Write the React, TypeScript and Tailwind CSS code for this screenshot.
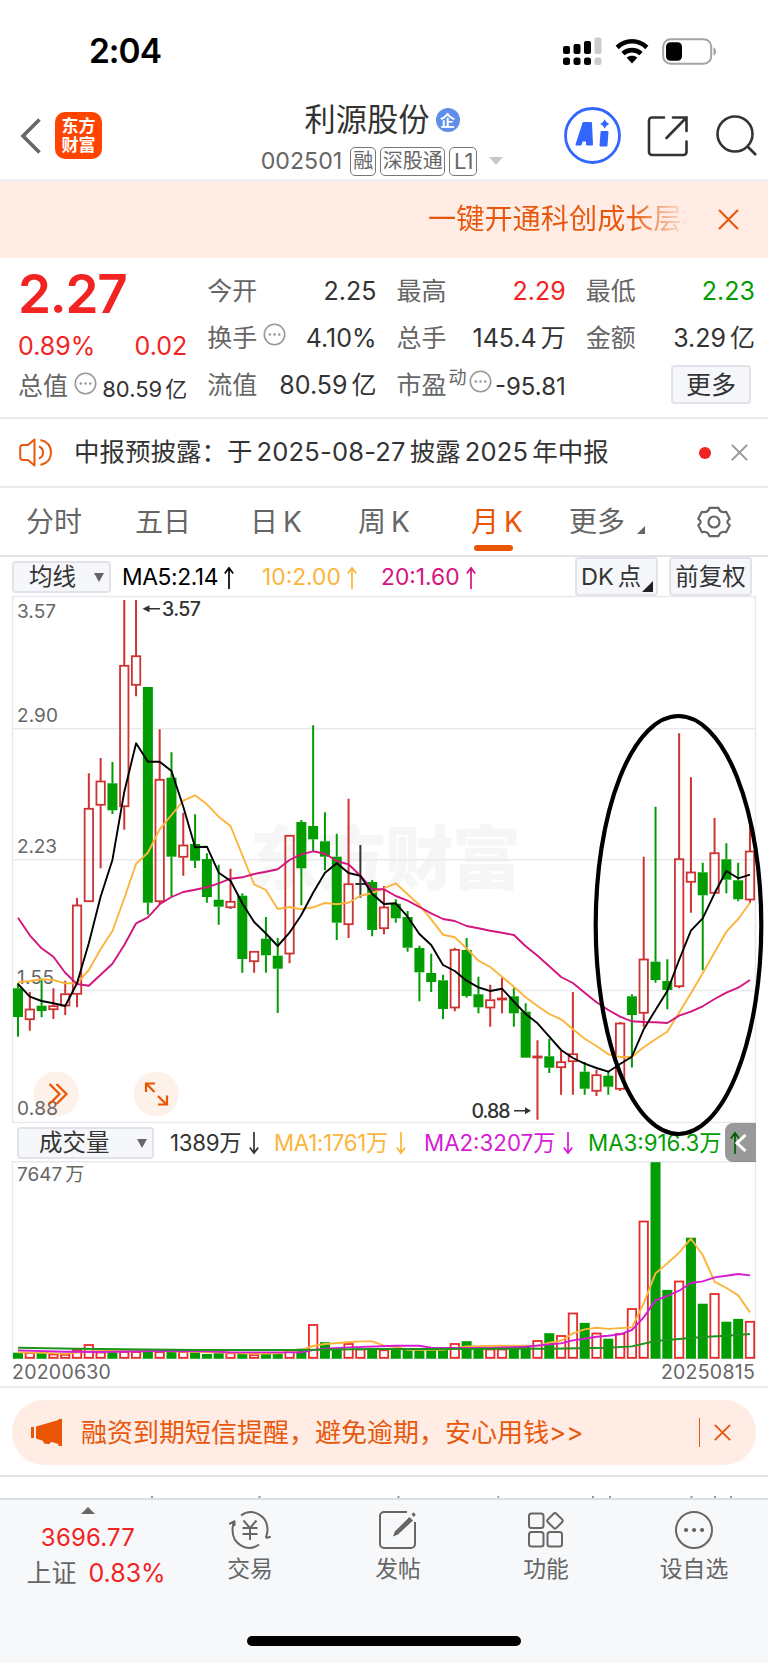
import React from 'react';

type Candle = [kind: 'u' | 'd' | 'n', high: number, top: number, bottom: number, low: number];

// monthly candles, y values in plot units
const CANDLES: Candle[] = [
    ['d', 983, 988.3, 1017, 1036.7], ['u', 992, 1009, 1019.7, 1030.7], ['d', 980, 1005.7, 1011, 1017.3],
    ['u', 988.3, 1005.7, 1009.7, 1019], ['u', 980.7, 993.7, 1006, 1015], ['u', 898, 905, 994.3, 1007.3],
    ['u', 773.3, 808.3, 901.7, 902], ['u', 758, 781, 805.3, 868.3], ['d', 762, 783.3, 810.3, 814],
    ['u', 600, 665.3, 806.7, 829.7], ['u', 600, 655.7, 685.3, 696.3], ['d', 687, 687, 902.7, 914.7],
    ['u', 729.3, 779.3, 901.7, 904], ['d', 752.3, 777.7, 856.7, 896.7], ['u', 812.7, 845, 857.3, 875.7],
    ['d', 814.3, 844, 860.7, 868], ['d', 853.3, 859, 897, 902.7], ['d', 864.7, 899.7, 906.7, 924.7],
    ['u', 868.7, 901.3, 907.7, 909], ['d', 893.3, 895.7, 959, 972.7], ['u', 951, 951.3, 961.7, 972.7],
    ['d', 917, 938.7, 955.3, 972.7], ['d', 938, 955.7, 968.7, 1013], ['u', 835, 835.3, 954, 963.3],
    ['d', 820, 822, 868.3, 905.3], ['d', 725.3, 826, 839.3, 851.7], ['d', 812.3, 841.3, 856.7, 870.3],
    ['d', 833.7, 856.7, 922.7, 940], ['u', 798.7, 883.7, 924.7, 938], ['n', 845, 883, 885, 897.7],
    ['d', 880, 882, 930, 936.3], ['u', 886, 907, 928.7, 934.3], ['d', 899.3, 903.7, 918.3, 922.7],
    ['d', 911, 917, 947.7, 951.7], ['d', 945.7, 948, 972.3, 1001.3], ['d', 953.7, 973, 982, 992],
    ['d', 974.7, 980.3, 1009, 1019], ['u', 947.7, 949.3, 1008, 1011.3], ['d', 938, 950, 996, 997.7],
    ['d', 976.7, 994.3, 1007.3, 1013.3], ['u', 984.7, 999.7, 1008, 1026.7], ['u', 978, 998, 1000, 1013.3],
    ['d', 988, 996.3, 1013.3, 1026.7], ['d', 1003.3, 1011.7, 1057.7, 1057.7], ['u', 1040.3, 1056, 1058, 1119.7],
    ['d', 1038.7, 1056.3, 1067.7, 1073], ['u', 1051, 1061.7, 1067.7, 1094.7], ['u', 992, 1053.7, 1061.7, 1094.7],
    ['d', 1062, 1071.7, 1088.7, 1094.7], ['u', 1069.7, 1074.7, 1091.3, 1096], ['d', 1071, 1075.7, 1086.7, 1094.7],
    ['u', 1022, 1023, 1089.3, 1091], ['d', 994.3, 996.3, 1015, 1067.5], ['u', 856.7, 959, 1013.3, 1026.7],
    ['d', 806.7, 961.7, 980, 982.7], ['d', 959.3, 981, 990, 1009.3], ['u', 733.3, 858.7, 986.7, 988.3],
    ['u', 777.3, 872, 882.3, 912.7], ['d', 862.7, 872.3, 895.3, 970.3], ['u', 818, 852.7, 893.3, 893.5],
    ['d', 843.3, 859.3, 879.7, 893.3], ['d', 862.7, 880.3, 899.3, 901.3], ['u', 825, 851, 900, 902.7],
];

const MA5 = [
    984, 996.7, 1001, 1003.3, 1006, 983.3, 943.3, 896.7, 860, 791.7, 743.3, 761.7, 761.7, 771, 806.7, 847.3,
    846.7, 872.7, 880.7, 903.3, 922, 933.5, 946, 932.7, 915, 892.7, 872.7, 863.3, 873, 875.7, 894, 904,
    903.3, 916.7, 934, 945, 965, 971, 980.7, 987.3, 991, 988.7, 1001.7, 1014, 1023.3, 1036.7, 1050, 1058,
    1063.7, 1068, 1071.7, 1064, 1056.7, 1029.3, 1010, 991, 960, 930.7, 918.3, 893.3, 871, 878.3, 874.7,
];

const MA10 = [
    982.3, 981, 979.3, 980, 983.3, 983.3, 970, 949.3, 931, 898.3, 863.7, 852.7, 829.3, 815, 800.7, 795.3,
    804.3, 816.7, 826, 855, 884.3, 890, 909, 907, 909.3, 907.3, 903, 904.3, 902.7, 895.7, 893, 888.3,
    883.3, 894.3, 905, 919.3, 934.7, 937.3, 948.3, 960.7, 967, 976.7, 986.7, 997.3, 1006, 1014, 1019.3, 1029.3,
    1038.7, 1046, 1054.3, 1057, 1057, 1047.3, 1039.3, 1031.7, 1012.7, 993.3, 973.3, 952.3, 931.7, 919, 902.7,
];

const MA20 = [
    917.7, 935.3, 948.3, 956.7, 972.7, 984, 985.7, 974.7, 963.7, 945, 923.3, 917.3, 904.3, 897, 892, 889.7,
    887.3, 883.3, 878.7, 877.3, 874, 871.7, 869.3, 860, 854.3, 851.3, 853.7, 861, 864.3, 875.7, 889.3, 889.3,
    896, 900.7, 907, 913.3, 919, 921, 926, 928.3, 930.7, 932.7, 935, 946.3, 955.7, 966.3, 977, 983,
    992.7, 1002.3, 1010, 1016.7, 1021.3, 1022, 1022.3, 1023, 1015.7, 1011.7, 1006.3, 999, 992.7, 987.7, 980,
];

// volume bar heights
const VOLUMES = [
    6, 6, 6, 4.5, 4.2, 9, 14, 6.5, 6.5, 7, 7, 7, 7, 7.3, 7, 7, 4.7, 5.7, 5.7, 5, 4, 4.7, 5.3, 7.3, 10, 34, 16.5,
    10, 15, 9.5, 10, 8.8, 10, 9.5, 9.5, 9.5, 9.5, 15, 17.5, 9.8, 9.5, 9.5, 10, 13.8, 18, 25.5, 23, 45.5, 35.8,
    25.5, 20, 25, 50, 137.5, 196.5, 68.8, 77.5, 121, 55, 65, 37, 39.8, 37.2,
];
const VOLUME_KIND = 'drdrrrrrdrrdrdrdddrdrddrdrddrrdrdddddrddrrddrdrrdrdrrrddrddrddr';

const VOL_MA1: [number, number][] = [
    [0, 6.5], [2, 6], [4, 4.8], [6, 7.3], [9, 8.7], [18, 6], [20, 4.8], [22, 5.3], [24, 8.7], [25, 12.7], [26, 14.7],
    [28, 16.5], [29, 17.3], [30, 17.3], [31, 13], [32, 11.7], [33, 9], [36, 8.8], [38, 12.3], [41, 13], [44, 12.7],
    [45, 16], [46, 18], [47, 25.3], [48, 29.3], [49, 31], [50, 29.8], [52, 31.3], [53, 55.3], [54, 85.3], [55, 95.3],
    [56, 106], [57, 120], [58, 103.7], [59, 77], [60, 70.7], [61, 63.3], [62, 46.3],
];
const VOL_MA2: [number, number][] = [
    [0, 8.3], [4, 7], [7, 6.7], [12, 7.7], [16, 7.5], [18, 6.3], [24, 6.3], [25, 8.7], [26, 10], [28, 11.3], [32, 13],
    [34, 13], [35, 11], [40, 10.7], [43, 12], [45, 14.3], [46, 15.3], [47, 18.3], [48, 20], [49, 22], [50, 23],
    [51, 24.3], [52, 28.7], [53, 41.3], [54, 58.3], [55, 62.7], [56, 68], [57, 75.7], [58, 77.3], [59, 81.3],
    [60, 83], [61, 84.7], [62, 83.3],
];
const VOL_MA3: [number, number][] = [
    [0, 11], [5, 10], [15, 8.7], [24, 8.7], [30, 9.7], [35, 9.7], [45, 10], [50, 11], [52, 12.3], [54, 17.7],
    [56, 19.7], [58, 21.7], [60, 23], [62, 24.7],
];

const RED = '#cd3333';
const VOL_RED = '#e82a2a';
const GREEN = '#029d02';
const BASE = 1358.7;

const cx = (i: number) => 18 + i * 11.806;
const toPoints = (values: number[]) => values.map((y, i) => `${cx(i).toFixed(1)},${y}`).join(' ');
const toVolPoints = (values: [number, number][]) => values.map(([i, v]) => `${cx(i).toFixed(1)},${BASE - v}`).join(' ');

const Close: React.FC<{ size: number; className?: string; width?: number }> = ({ size, className, width = 2 }) => (
    <svg width={size} height={size} viewBox="0 0 20 20" className={className} fill="none" stroke="currentColor" strokeWidth={width}>
        <path d="M1 1 19 19M19 1 1 19" />
    </svg>
);

const Arrow: React.FC<{ down?: boolean }> = ({ down }) => (
    <svg width="10" height="24" viewBox="0 0 10 24" className={down ? 'rotate-180' : ''} fill="none" stroke="currentColor" strokeWidth="1.700">
        <path d="M5 23V2M.8 7.500 5 2l4.200 5.500" />
    </svg>
);

const MoreDots: React.FC = () => (
    <svg width="23" height="23" viewBox="0 0 23 23" className="shrink-0" fill="none" stroke="#999">
        <circle cx="11.500" cy="11.500" r="10.200" strokeWidth="1.600" />
        <path d="M6.800 11.500h.1M11.500 11.500h.1M16.200 11.500h.1" strokeWidth="2.600" strokeLinecap="round" />
    </svg>
);

const StatusBar: React.FC = () => (
    <div className="flex h-[100px] items-start justify-between pl-[89px] pr-[50px]">
        <span className="pt-[30px] text-[33.500px] leading-[42px] font-semibold tracking-[-1px] text-black">2:04</span>
        <div className="flex items-center pt-[36px]">
            <svg width="40" height="30" viewBox="0 0 40 30">
                <g fill="#000">
                    <rect x="1" y="10" width="7" height="8" rx="2" />
                    <rect x="11.500" y="8" width="7" height="10" rx="2" />
                    <rect x="22" y="5" width="7" height="13" rx="2" />
                    <rect x="1" y="21.500" width="7" height="7.500" rx="2.500" />
                    <rect x="11.500" y="21.500" width="7" height="7.500" rx="2.500" />
                    <rect x="22" y="21.500" width="7" height="7.500" rx="2.500" />
                </g>
                <g fill="#cbcbcb">
                    <rect x="32.500" y="1.500" width="7" height="16.500" rx="2" />
                    <rect x="32.500" y="21.500" width="7" height="7.500" rx="2.500" />
                </g>
            </svg>
            <svg width="34" height="26" viewBox="0 0 34 26" className="ml-[13px]" fill="none" stroke="#000" strokeWidth="4.600">
                <path d="M2.200 9.500C10.500 1.200 23.500 1.200 31.800 9.500" />
                <path d="M8 15.600c5-4.700 13-4.700 18 0" />
                <path d="m17 25.500-5.300-5.800c3-2.500 7.600-2.500 10.600 0z" fill="#000" stroke="none" />
            </svg>
            <svg width="56" height="27" viewBox="0 0 56 27" className="ml-[13px]">
                <rect x="1.200" y="1.200" width="48" height="24.500" rx="7.500" fill="none" stroke="#a3a3a3" strokeWidth="2" />
                <rect x="4" y="4.200" width="16" height="18.600" rx="4.500" />
                <path d="M51.500 9.500c3.300 1 3.300 7 0 8z" fill="#a3a3a3" />
            </svg>
        </div>
    </div>
);

const Header: React.FC = () => (
    <header className="grid h-[81px] grid-cols-[240px_1fr_240px] border-b-2 border-[#ebedf0]">
        <div className="flex items-start pt-[12px] pl-[19px]">
            <svg width="22" height="36" viewBox="0 0 22 36" className="mt-[6px]" fill="none" stroke="#666" strokeWidth="3.600">
                <path d="M20.500 1.500 4 18l16.500 16.500" />
            </svg>
            <div className="ml-[14px] flex h-[47px] w-[47px] flex-col items-center justify-center rounded-[10px] bg-[#ff4400] text-[17px] leading-[19px] font-bold text-white">
                <span>东方</span>
                <span>财富</span>
            </div>
        </div>
        <div className="flex flex-col items-center pr-[4px]">
            <div className="flex h-[40px] items-center text-[31.300px] leading-[40px] text-[#333]">
                利源股份
                <span className="ml-[6px] flex h-6 w-6 items-center justify-center rounded-full bg-[#5f8fe8] text-[15px] leading-none font-bold text-white">企</span>
            </div>
            <div className="mt-[6px] flex h-[30px] items-center text-[20px] text-[#666]">
                <span className="mr-2 text-[23.200px]">002501</span>
                <span className="mr-1 flex h-[29px] items-center rounded-[5px] border-[1.500px] border-[#777] px-[2px]">融</span>
                <span className="mr-1 flex h-[29px] items-center rounded-[5px] border-[1.500px] border-[#777] px-[1.500px]">深股通</span>
                <span className="flex h-[29px] w-[28px] items-center justify-center rounded-[5px] border-[1.500px] border-[#777] text-[22px] tracking-[-1px]">L1</span>
                <svg width="14" height="8" className="ml-[12px]" fill="#c8c8c8"><path d="M0 0h14L7 8z" /></svg>
            </div>
        </div>
        <div className="flex items-start pt-[7px] pl-[36px]">
            <svg width="57" height="57" viewBox="0 0 57 57" fill="none" stroke="#3366ff">
                <circle cx="28.500" cy="28.500" r="27" strokeWidth="2.800" />
                <path d="M12.500 37.500 19.500 16h7.500l1 21.500h-5v-4h-5l-1.300 4zM20.300 28.500h3V22z" fill="#3366ff" strokeWidth="2" strokeLinejoin="round" />
                <path d="M37.500 25h6l-1 13.500h-6z" fill="#3366ff" strokeWidth="2" strokeLinejoin="round" />
                <path d="M40.700 12.300q1.200 3.500 4.500 4.700-3.300 1.200-4.500 4.700-1.200-3.500-4.500-4.700 3.300-1.200 4.500-4.700z" fill="#3366ff" stroke="none" />
            </svg>
            <svg width="42" height="42" viewBox="0 0 42 42" className="ml-[26px] mt-[8px]" fill="none" stroke="#333" strokeWidth="2.600" strokeLinecap="round">
                <path d="M17 2.500H5a3 3 0 0 0-3 3V37a3 3 0 0 0 3 3h31.500a3 3 0 0 0 3-3V26.500" />
                <path d="M26 2.500h13.500V16M39 3 19.500 23" />
            </svg>
            <svg width="42" height="42" viewBox="0 0 42 42" className="ml-[26px] mt-[7px]" fill="none" stroke="#333" strokeWidth="2.600">
                <circle cx="20" cy="20" r="17.500" />
                <path d="m32.500 32.500 8.500 8.500" />
            </svg>
        </div>
    </header>
);

const Banner: React.FC = () => (
    <div className="flex h-[77px] items-center justify-end bg-[#feece5] pr-[29px] text-[#e8580c]">
        <div className="w-[260px] overflow-hidden bg-gradient-to-r from-[#e8580c] from-78% to-transparent bg-clip-text text-[28.200px] whitespace-nowrap text-transparent">
            一键开通科创成长层权
        </div>
        <Close size={21} className="ml-[30px]" />
    </div>
);

interface CellProps {
    label: string;
    value?: string;
    unit?: string;
    tone?: string;
    dots?: boolean;
    sup?: string;
}

const Cell: React.FC<CellProps> = ({ label, value, unit, tone = 'text-[#333]', dots, sup }) => (
    <div className="flex h-[47px] items-center justify-between text-[25px] whitespace-nowrap">
        <span className="flex items-center text-[#666]">
            {label}
            {sup && <span className="-mt-[16px] ml-[2px] w-[20px] text-[18px]">{sup}</span>}
            {dots && <span className={sup ? '-mt-[8px]' : '-mt-[8px] ml-[6px]'}><MoreDots /></span>}
        </span>
        <span className={tone}>
            {value}
            {unit && <span className="ml-[4px]">{unit}</span>}
        </span>
    </div>
);

const Quote: React.FC = () => (
    <section className="grid h-[161px] grid-cols-4 gap-x-5 border-b-2 border-[#ebebeb] pt-[10px] pr-[13px] pl-[18px]">
        <div className="text-[#f12323]">
            <div className="h-[56px] text-[53px] leading-[53px] font-semibold tracking-[-1.200px]">2.27</div>
            <div className="flex h-[46px] items-center justify-between text-[25px]">
                <span>0.89%</span>
                <span>0.02</span>
            </div>
            <div className="flex h-[34px] items-center justify-between text-[25px] whitespace-nowrap text-[#666]">
                <span className="flex items-center">总值<span className="-mt-[8px] ml-[6px]"><MoreDots /></span></span>
                <span className="pt-[4px] text-[22px] text-[#333]">80.59<span className="ml-[3px]">亿</span></span>
            </div>
        </div>
        <div>
            <Cell label="今开" value="2.25" />
            <Cell label="换手" value="4.10%" dots />
            <Cell label="流值" value="80.59" unit="亿" />
        </div>
        <div>
            <Cell label="最高" value="2.29" tone="text-[#f12323]" />
            <Cell label="总手" value="145.4" unit="万" />
            <Cell label="市盈" sup="动" value="-95.81" dots tone="text-[#333] text-[24px] pt-[3px]" />
        </div>
        <div>
            <Cell label="最低" value="2.23" tone="text-[#029d02]" />
            <Cell label="金额" value="3.29" unit="亿" />
            <div className="flex justify-end pt-[3px] pr-[4px]">
                <button className="h-[39px] w-[80px] rounded-[4px] border-2 border-[#e1e3e9] bg-[#f6f7fa] text-[25px] leading-[34px] text-[#333]">更多</button>
            </div>
        </div>
    </section>
);

const Notice: React.FC = () => (
    <div className="flex h-[69px] items-center border-b-2 border-[#ebebeb] pr-[20px] pl-[19px] text-[25.500px] text-[#333]">
        <svg width="34" height="29" viewBox="0 0 34 29" fill="none" stroke="#e8580c" strokeWidth="2" strokeLinejoin="round">
            <path d="M15.500 1.500v26L9 22H4q-2.800 0-2.800-3v-9q0-3 2.800-3h5z" />
            <path d="M20 8.500q4 1.500 4 6t-4 6M21.500 2q10.500 2.500 10.500 12.500T21.500 27" />
        </svg>
        <span className="ml-[21px] whitespace-nowrap">中报预披露：于<span className="mx-[4px] tracking-[0.200px]">2025-08-27</span>披露<span className="mx-[4px] tracking-[0.200px]">2025</span>年中报</span>
        <span className="ml-auto h-3 w-3 rounded-full bg-[#f12323]" />
        <Close size={17} className="ml-[20px] text-[#999]" width={2.4} />
    </div>
);

const Tabs: React.FC = () => (
    <nav className="flex h-[69px] items-start border-b-2 border-[#e1e3e9] pt-[14px] pl-[26px] text-[28px] leading-[40px] whitespace-nowrap text-[#666]">
        <span className="w-[109px]">分时</span>
        <span className="w-[115px]">五日</span>
        <span className="w-[108px]">日<span className="ml-[5px]">K</span></span>
        <span className="w-[113px]">周<span className="ml-[5px]">K</span></span>
        <span className="w-[98px] text-[#ea5504]">
            月<span className="ml-[5px]">K</span>
            <span className="mt-[3px] ml-[3px] block h-[6px] w-[39px] rounded-[3px] bg-[#ea5504]" />
        </span>
        <span className="flex w-[128px] items-start">
            更多
            <svg width="8" height="8" className="mt-[24px] ml-[12px]" fill="#666"><path d="M8 0v8H0z" /></svg>
        </span>
        <svg width="34" height="32" viewBox="0 0 34 32" className="mt-[4px]" fill="none" stroke="#666" strokeWidth="2.200" strokeLinejoin="round">
            <path d="M12.500 1.800h9q1.200 3.700 4 4.200 2.300.4 3.600-.2l3.600 7q-2.400 1.700-2.400 3.200t2.400 3.200l-3.600 7q-1.300-.6-3.600-.2-2.800.5-4 4.200h-9q-1.200-3.700-4-4.200-2.300-.4-3.600.2l-3.600-7q2.400-1.700 2.400-3.200t-2.400-3.200l3.600-7q1.300.6 3.600.2 2.800-.5 4-4.200z" />
            <circle cx="17" cy="16" r="5.500" />
        </svg>
    </nav>
);

const KToolbar: React.FC = () => (
    <div className="flex h-[39px] items-start pl-[12px] text-[23.500px] whitespace-nowrap text-[#333]">
        <button className="mt-[4px] flex h-[32px] w-[99px] items-center justify-between rounded-[4px] border-2 border-[#e1e3e9] bg-[#f6f7fa] pr-[5px] pl-[15px]">
            均线
            <svg width="10" height="9" fill="#666"><path d="M0 0h10L5 9z" /></svg>
        </button>
        <div className="mt-[3px] flex h-[35px] items-center text-[22.800px]">
            <span className="ml-[11px] flex w-[140px] items-center gap-[6px] tracking-[-0.400px] text-black">MA5:2.14<Arrow /></span>
            <span className="flex w-[119px] items-center gap-[6px] text-[#fbb53c]">10:2.00<Arrow /></span>
            <span className="flex items-center gap-[6px] text-[#d4147f]">20:1.60<Arrow /></span>
        </div>
        <button className="relative ml-auto h-[39px] w-[83px] rounded-[4px] border-2 border-[#e1e3e9] bg-[#f6f7fa] pl-[4px] text-left">
            DK<span className="ml-[4px]">点</span>
            <svg width="11" height="11" className="absolute right-[3px] bottom-[2px]" fill="#222"><path d="M11 0v11H0z" /></svg>
        </button>
        <button className="mr-[16px] ml-[11px] h-[39px] w-[83px] rounded-[4px] border-2 border-[#e1e3e9] bg-[#f6f7fa]">前复权</button>
    </div>
);

const CandleChart: React.FC = () => (
    <svg width="768" height="527" viewBox="0 596 768 527" className="relative z-10 block overflow-visible">
        <text x="250" y="884" fontSize="69" textLength="271" fill="#f6f6f6" className="font-black">东方财富</text>
        <path d="M12.500 596.500H755.500V1122.500H12.500ZM12.500 728.700H755.500M12.500 859.700H755.500M12.500 990.500H755.500" fill="none" stroke="#e8e9ee" strokeWidth="1.500" />
        <g fill="#fdf1ea">
            <circle cx="56.300" cy="1094" r="22.500" />
            <circle cx="156.300" cy="1094" r="22.500" />
        </g>
        <g fontSize="19" fill="#666">
            <text x="17" y="617.500" textLength="39">3.57</text>
            <text x="17" y="722" textLength="41">2.90</text>
            <text x="17" y="853" textLength="40">2.23</text>
            <text x="17" y="984" textLength="37">1.55</text>
            <text x="17" y="1115" textLength="41">0.88</text>
        </g>
        <g fill="none" stroke="#ea5504" strokeWidth="2.200">
            <path d="m49.500 1084 10 10-10 10M56.500 1084l10 10-10 10" />
            <path d="M146 1092v-8.500h9M146.500 1084l8 8M167 1095.500v9h-9M166 1104l-8-8" />
        </g>
        {CANDLES.map(([kind, high, top, bottom, low], i) => {
            const x = cx(i);
            const color = kind === 'u' ? RED : kind === 'd' ? GREEN : '#333';
            return (
                <g key={i} stroke={color} strokeWidth="2">
                    <path d={`M${x} ${high}V${top}M${x} ${bottom}V${low}`} />
                    {kind === 'u' && <rect x={x - 4.2} y={top + 0.5} width="8.400" height={Math.max(bottom - top - 1, 0.5)} fill="none" strokeWidth="1.800" />}
                    {kind === 'd' && <rect x={x - 5} y={top} width="10" height={bottom - top} fill={GREEN} stroke="none" />}
                    {kind === 'n' && <path d={`M${x - 5} 884H${x + 5}`} />}
                </g>
            );
        })}
        <g fill="none" strokeWidth="1.900" strokeLinejoin="round">
            <polyline points={toPoints(MA10)} stroke="#fbb53c" />
            <polyline points={toPoints(MA20)} stroke="#d4147f" />
            <polyline points={toPoints(MA5)} stroke="#000" />
        </g>
        <g fontSize="19.500" fontWeight="500" fill="#333">
            <text x="162" y="615.500" textLength="39">3.57</text>
            <text x="471.500" y="1117.700" textLength="39">0.88</text>
        </g>
        <path d="M160 608.700H148M514 1110.700H527" stroke="#333" strokeWidth="1.600" />
        <path d="M142.500 608.700l7-3.500v7zM531 1110.700l-6-3.500v7z" fill="#333" />
        <ellipse cx="678.500" cy="925" rx="82.800" ry="209" fill="none" stroke="#000" strokeWidth="4.200" />
    </svg>
);

const VolumeToolbar: React.FC = () => (
    <div className="relative flex h-[38px] items-start pl-[17px] text-[23.500px] whitespace-nowrap">
        <button className="mt-[4px] flex h-[32px] w-[137px] items-center justify-between rounded-[4px] border-2 border-[#e1e3e9] bg-[#f6f7fa] pr-[5px] pl-[20px] text-[#333]">
            成交量
            <svg width="10" height="9" fill="#666"><path d="M0 0h10L5 9z" /></svg>
        </button>
        <div className="mt-[2px] flex h-[36px] items-center text-[22.300px]">
            <span className="ml-[16px] flex w-[104px] items-center gap-[8px] tracking-[-0.300px] text-[#333]">1389万<Arrow down /></span>
            <span className="flex w-[150px] items-center gap-[8px] tracking-[-0.300px] text-[#fbb53c]">MA1:1761万<Arrow down /></span>
            <span className="flex w-[164px] items-center gap-[8px] text-[#d51bd5]">MA2:3207万<Arrow down /></span>
            <span className="flex items-center gap-[8px] text-[#029d02]">MA3:916.3万<Arrow /></span>
        </div>
        <div className="absolute top-0 right-[12px] z-20 flex h-[39px] w-[31px] items-center justify-center rounded-l-[8px] bg-black/40">
            <svg width="12" height="18" viewBox="0 0 12 18" fill="none" stroke="#fff" strokeWidth="3"><path d="m10.500 1-8.500 8 8.500 8" /></svg>
        </div>
    </div>
);

const VolumeChart: React.FC = () => (
    <svg width="768" height="198" viewBox="0 1161 768 198" className="block">
        <path d="M12.500 1359V1161.800H755.500V1359" fill="none" stroke="#e8e9ee" strokeWidth="1.500" />
        <path d="M12 1358.700H756" stroke="#ddd" strokeWidth="1.500" />
        <text x="17" y="1181" fontSize="19" fill="#666">7647<tspan dx="3">万</tspan></text>
        {VOLUMES.map((v, i) => VOLUME_KIND[i] === 'r'
            ? <rect key={i} x={cx(i) - 4.2} y={BASE - v + 0.3} width="8.400" height={Math.max(v - 1.2, 1)} fill="none" stroke={VOL_RED} strokeWidth="1.800" />
            : <rect key={i} x={cx(i) - 5} y={BASE - v} width="10" height={v} fill={GREEN} />)}
        <g fill="none" strokeWidth="1.900" strokeLinejoin="round">
            <polyline points={toVolPoints(VOL_MA1)} stroke="#fbb53c" />
            <polyline points={toVolPoints(VOL_MA2)} stroke="#d51bd5" />
            <polyline points={toVolPoints(VOL_MA3)} stroke="#1d951d" />
        </g>
    </svg>
);

const Promo: React.FC = () => (
    <div className="h-[89px] border-b-2 border-[#e1e3e9] px-[12px] pt-[12px]">
        <div className="flex h-[65px] items-center rounded-[32px] bg-[#feece5] pr-[25px] pl-[19px] text-[26px] text-[#e8580c]">
            <svg width="31" height="27" viewBox="0 0 31 27" fill="#ea5504">
                <path d="M0 8h3v11H0zM5 7.500 27.500 1V0H31v27h-3.500v-2L20 22.800c-.8 2.500-2.500 2.500-4 2-2 .6-4-.8-4-3L5 19.500z" />
            </svg>
            <span className="ml-[19px] whitespace-nowrap">融资到期短信提醒，避免逾期，安心用钱&gt;&gt;</span>
            <span className="ml-auto h-[29px] w-[1.500px] bg-[#e8580c]" />
            <Close size={17} className="ml-[14px]" width={2.2} />
        </div>
    </div>
);

const NavItem: React.FC<{ label: string; children: React.ReactNode }> = ({ label, children }) => (
    <div className="flex w-[148px] flex-col items-center pt-[10px] text-[22.800px] leading-[30px] text-[#666]">
        <svg width="42" height="40" viewBox="0 0 42 40" fill="none" stroke="#666" strokeWidth="2" strokeLinejoin="round">{children}</svg>
        <span className="mt-[4px]">{label}</span>
    </div>
);

const BottomBar: React.FC = () => (
    <footer className="flex h-[166px] flex-col border-t-2 border-[#dcdfe6] bg-[#f7f8fa]">
        <div className="flex h-[136px]">
            <div className="flex w-[176px] flex-col items-center pt-[7px] text-[24px] text-[#f12323]">
                <svg width="14" height="7" fill="#666"><path d="M7 0l7 7H0z" /></svg>
                <span className="mt-[7px] leading-[34px] tracking-[0.200px]">3696.77</span>
                <span className="ml-[16px] flex gap-[12px] pt-[2px] leading-[32px] whitespace-nowrap"><span className="text-[25px] text-[#666]">上证</span><span className="text-[25px]">0.83%</span></span>
            </div>
            <NavItem label="交易">
                <path d="M12 5.500C23-2.500 38.500 5 38.500 20c0 3-.8 5.500-1.800 7.500M36.700 28l5-1.200M30 34.500C19 42.500 3.500 35 3.500 20c0-3.500.8-6 1.800-8M0 14l5.500-2.800V16" />
                <path d="m14.500 10.500 6.500 7.500 6.500-7.500M13.500 18h15M13.500 24h15M21 18v12" />
            </NavItem>
            <NavItem label="发帖">
                <path d="M30 2H7a4 4 0 0 0-4 4v28a4 4 0 0 0 4 4h27a4 4 0 0 0 4-4V12" />
                <path d="m32.500 7 3.500 3.500-15 14-5 2 1.800-5zM34.500 4.500l2-2.300 2.200 2.300-1.700 2.500z" fill="#666" stroke="none" />
            </NavItem>
            <NavItem label="功能">
                <rect x="4" y="3.500" width="14.500" height="14.500" rx="2.500" />
                <rect x="4" y="22" width="14.500" height="14.500" rx="2.500" />
                <rect x="22.500" y="22" width="14.500" height="14.500" rx="2.500" />
                <rect x="24" y="4.800" width="12" height="12" rx="2" transform="rotate(45 30 10.800)" />
            </NavItem>
            <NavItem label="设自选">
                <circle cx="21" cy="20" r="18" />
                <path d="M13 20h.1M21 20h.1M29 20h.1" strokeWidth="4.200" strokeLinecap="round" />
            </NavItem>
        </div>
        <div className="mx-auto h-[10px] w-[274px] rounded-full bg-black" />
    </footer>
);

const App: React.FC = () => (
    <div className="h-[1663px] w-[768px] overflow-hidden bg-white font-['Inter','Noto_Sans_CJK_SC',sans-serif]">
        <StatusBar />
        <Header />
        <Banner />
        <Quote />
        <Notice />
        <Tabs />
        <KToolbar />
        <CandleChart />
        <VolumeToolbar />
        <VolumeChart />
        <div className="flex h-[29px] justify-between border-b-2 border-[#ebebeb] pr-[13px] pl-[12px] text-[19.500px] leading-[27px] tracking-[0.250px] text-[#666]">
            <span>20200630</span>
            <span>20250815</span>
        </div>
        <Promo />
        {/* tops of the row hidden under the bottom bar */}
        <svg width="768" height="21" className="block">
            <path d="M151 20h2M258.500 20h2M397.500 20h2M497.500 20h1.500M592 20h2M609 20h2M690.500 20h2M714 20h2M730 20h2" stroke="#999" strokeWidth="2" />
        </svg>
        <BottomBar />
    </div>
);

export default App;
